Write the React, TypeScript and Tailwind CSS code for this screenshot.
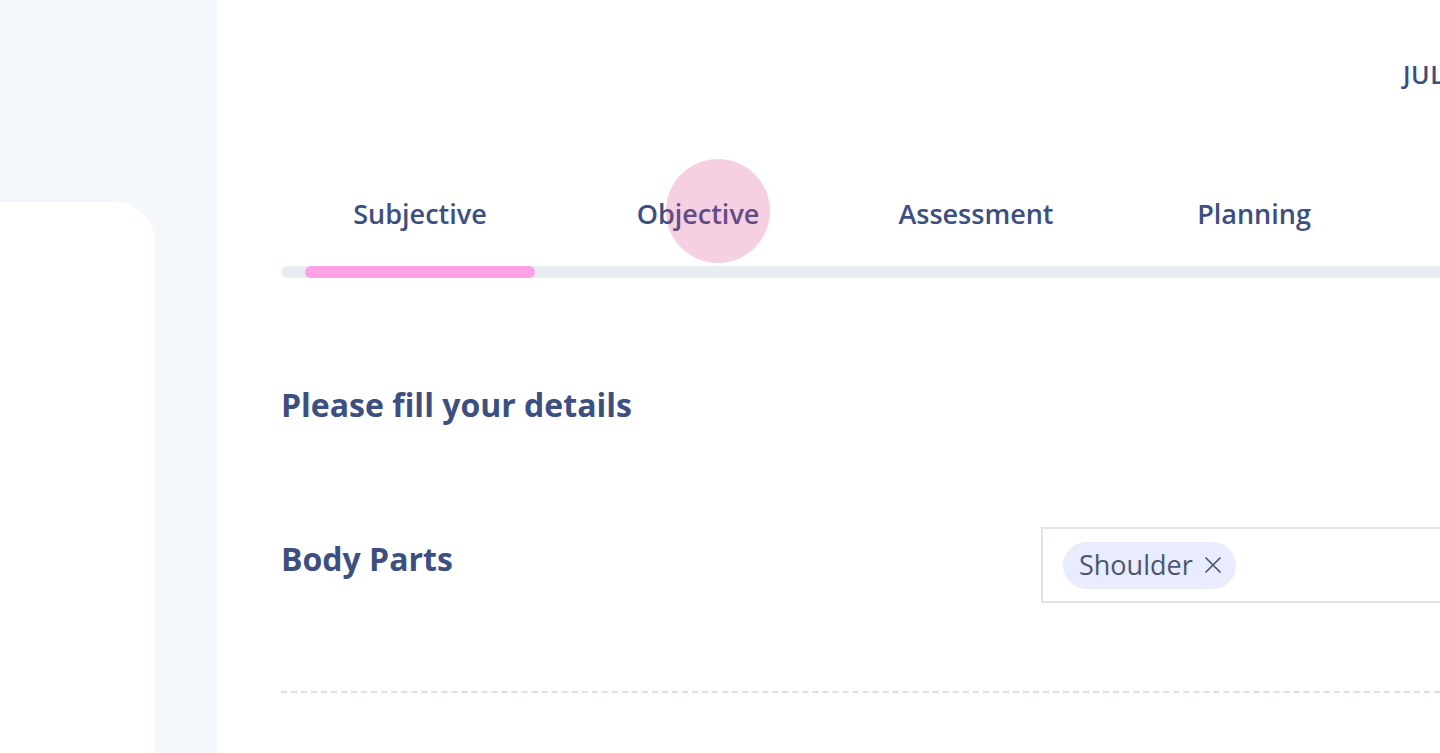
import React from "react";

const tabs = ["Subjective", "Objective", "Assessment", "Planning"];

export default function App() {
  return (
    <div
      className="w-[1440px] h-[753px] overflow-hidden flex bg-white"
      style={{ fontFamily: '"Open Sans", "Noto Sans", sans-serif' }}
    >
      <aside className="w-[217px] shrink-0 bg-[#f4f7fc] flex flex-col">
        <div className="h-[202px]" />
        <div className="w-[155px] flex-1 bg-white rounded-tr-[40px]" />
      </aside>
      <main className="flex-1 min-w-0 pl-[64px] relative">
        <div className="h-[153px] flex justify-end pt-[56px]">
          <span className="text-[25px] font-semibold text-[#3d4f80] tracking-wide whitespace-nowrap leading-[36px] -mr-[122px] w-[159px]">
            JULY 2023
          </span>
        </div>
        <div className="flex w-[1112px] h-[113px]">
          {tabs.map((t) => (
            <div key={t} className="w-[278px] shrink-0 flex justify-center pt-[42px]">
              <span className="text-[27px] font-semibold text-[#3d4f80] leading-[38px]">{t}</span>
            </div>
          ))}
        </div>
        <div className="absolute left-[449px] top-[159px] w-[104px] h-[104px] rounded-full bg-[#d7438f]/25" />
        <div className="h-[12px] w-[1300px] rounded-full bg-[#e8ebef] relative">
          <div className="absolute left-[24px] top-0 h-[12px] w-[230px] rounded-full bg-[#ffa1e6]" />
        </div>
        <h2 className="mt-[106px] text-[32px] font-bold text-[#3d4f80] leading-[42px]">Please fill your details</h2>
        <div className="mt-[101px] flex items-start">
          <div className="w-[760px] pt-[11px] text-[32px] font-bold text-[#3d4f80] leading-[42px]">Body Parts</div>
          <div className="flex-1 h-[76px] border-2 border-[#dfe3ea] border-r-0 flex items-center pl-[20px]">
            <div className="h-[47px] rounded-full bg-[#e8ecfc] flex items-center pl-[16px] pr-[15px] gap-[12px]">
              <span className="text-[27px] text-[#4b5670] leading-[36px]">Shoulder</span>
              <svg width="16" height="16" viewBox="0 0 16 16" fill="none" stroke="#4b5670" strokeWidth="1.7" strokeLinecap="round">
                <path d="M1 1L15 15M15 1L1 15" />
              </svg>
            </div>
          </div>
        </div>
        <div className="mt-[88px] border-t-2 border-dashed border-[#dcdff0]" />
      </main>
    </div>
  );
}
